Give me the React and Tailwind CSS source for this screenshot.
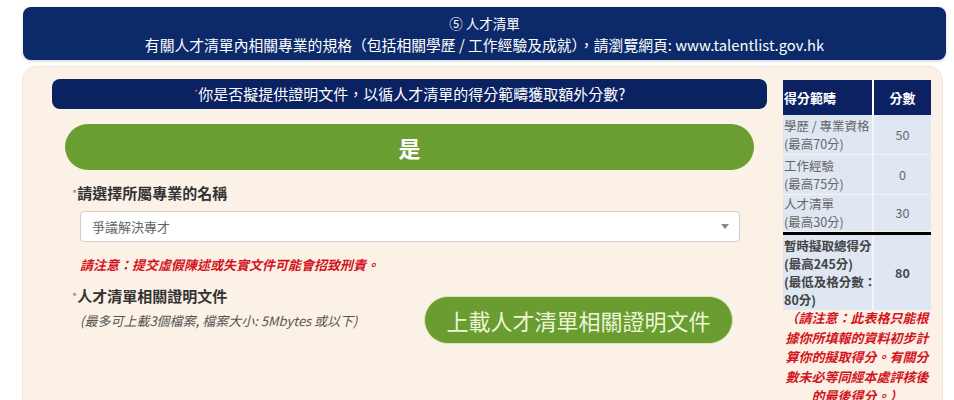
const font = { fontFamily: '"Noto Sans CJK TC", "Noto Sans", sans-serif' };

const rows = [
  { label: '學歷 / 專業資格', max: '(最高70分)', score: '50', h: 'h-[40px]' },
  { label: '工作經驗', max: '(最高75分)', score: '0', h: 'h-[40px]' },
  { label: '人才清單', max: '(最高30分)', score: '30', h: 'h-[37px]' },
];

const ScoreTable = () => (
  <div className="w-[148px] shrink-0 pt-[1px]">
    <div className="flex h-[35px] bg-[#0b2162] text-white text-[13px] font-bold">
      <div className="w-[91px] flex items-center pl-[1px] border-r-2 border-white">得分範疇</div>
      <div className="flex-1 flex items-center justify-center">分數</div>
    </div>
    {rows.map((r, i) => (
      <div key={i} className={`flex ${r.h} bg-[#dfe7f2] text-[#666] text-[12.5px] leading-[18px] border-b border-[#f4f4f4]`}>
        <div className="w-[91px] pl-[1px] flex flex-col justify-center whitespace-nowrap border-r-2 border-[#f4f4f4]">
          <div>{r.label}</div>
          <div>{r.max}</div>
        </div>
        <div className="flex-1 flex items-center justify-center">{r.score}</div>
      </div>
    ))}
    <div className="h-[3px] bg-black" />
    <div className="flex h-[75px] bg-[#dfe7f2] text-[#444] text-[12.5px] leading-[18px] font-bold">
      <div className="w-[91px] pl-[1px] flex flex-col justify-center whitespace-nowrap border-r-2 border-[#f4f4f4]">
        <div>暫時擬取總得分</div>
        <div>(最高245分)</div>
        <div>(最低及格分數：</div>
        <div>80分)</div>
      </div>
      <div className="flex-1 flex items-center justify-center">80</div>
    </div>
    <p className="-mt-[2px] text-center text-[13px] leading-[19.5px] italic font-bold text-[#d4141c]">
      （請注意：此表格只能根據你所填報的資料初步計算你的擬取得分。有關分數未必等同經本處評核後的最後得分。）
    </p>
  </div>
);

export default function App() {
  return (
    <div className="w-[954px] h-[400px] overflow-hidden bg-white" style={font}>
      <div className="ml-[23px] mr-[8px] mt-[7px] h-[53px] rounded-[8px] bg-[#0c2a6a] text-white flex flex-col items-center justify-center text-[13.5px] leading-[22px] shadow-[0_1px_3px_rgba(0,0,0,0.2)]">
        <div>⑤ 人才清單</div>
        <div className="text-[14.8px]">有關人才清單內相關專業的規格（包括相關學歷 / 工作經驗及成就），請瀏覽網頁: www.talentlist.gov.hk</div>
      </div>

      <div className="ml-[22px] mr-[11px] mt-[6px] h-[400px] rounded-[14px] bg-[#fcf1e6] border border-[#f3e6d8] flex gap-[16px] pl-[29px] pr-[11px] pt-[12px]">
        <div className="flex-1">
          <div className="h-[30px] rounded-[8px] bg-[#0a2162] text-white text-[15px] flex items-center justify-center">
            <span className="text-[#e03a3a] text-[10px] self-start mt-[6px]">*</span>
            <span>你是否擬提供證明文件，以循人才清單的得分範疇獲取額外分數?</span>
          </div>
          <div className="mx-[13px] mt-[15px] h-[46px] rounded-full bg-[#6b9e31] text-white text-[22px] font-bold flex items-center justify-center">是</div>

          <div className="mt-[13px] ml-[20px] text-[15px] font-bold text-[#333] leading-[20px]">
            <span className="text-[#888] font-normal text-[11px] align-top">*</span>請選擇所屬專業的名稱
          </div>
          <div className="mt-[8px] ml-[28px] w-[660px] h-[31px] bg-white border border-[#cfcfcf] rounded-[4px] flex items-center justify-between pl-[11px] pr-[10px]">
            <span className="text-[13px] text-[#666]">爭議解決專才</span>
            <span className="w-0 h-0 border-l-[4px] border-r-[4px] border-t-[5px] border-l-transparent border-r-transparent border-t-[#888]" />
          </div>
          <p className="mt-[13px] ml-[28px] text-[13px] italic font-bold text-[#d4141c] leading-[20px]">請注意：提交虛假陳述或失實文件可能會招致刑責。</p>

          <div className="mt-[11px] flex">
            <div className="ml-[20px] w-[332px]">
              <div className="text-[15px] font-bold text-[#333] leading-[20px]">
                <span className="text-[#888] font-normal text-[11px] align-top">*</span>人才清單相關證明文件
              </div>
              <p className="mt-[6px] ml-[8px] text-[13px] italic text-[#555] leading-[18px]">(最多可上載3個檔案, 檔案大小: 5Mbytes 或以下)</p>
            </div>
            <div className="ml-[20px] mt-[10px] w-[309px] h-[48px] rounded-full bg-[#6a9c32] border border-[#d9ecb8] text-[#ecf7d6] text-[22px] flex items-center justify-center">上載人才清單相關證明文件</div>
          </div>
        </div>
        <ScoreTable />
      </div>
    </div>
  );
}
